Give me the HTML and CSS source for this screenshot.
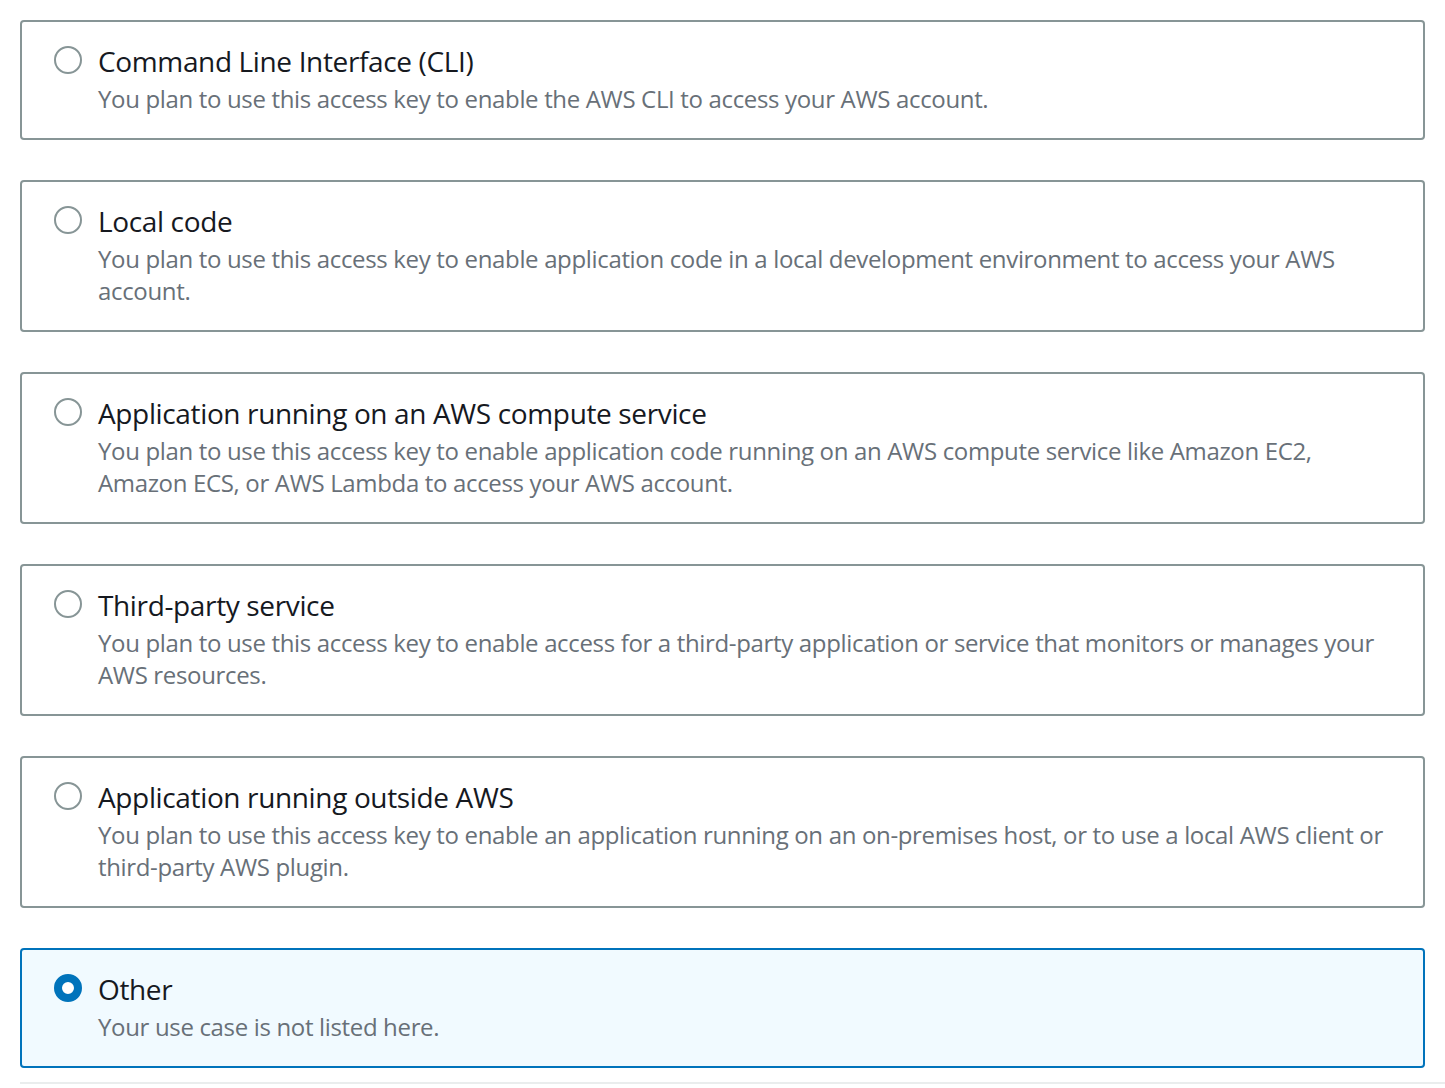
FILE: index.html
```html
<!DOCTYPE html>
<html lang="en">
<head>
<meta charset="utf-8">
<title>Access key best practices &amp; alternatives</title>
<link rel="stylesheet" href="styles.css">
</head>
<body>
<div class="page">
  <div class="tiles" role="radiogroup">
    <label class="tile">
      <span class="radio"></span>
      <span class="text">
        <span class="title">Command Line Interface (CLI)</span>
        <span class="desc">You plan to use this access key to enable the AWS CLI to access your AWS account.</span>
      </span>
    </label>
    <label class="tile">
      <span class="radio"></span>
      <span class="text">
        <span class="title">Local code</span>
        <span class="desc">You plan to use this access key to enable application code in a local development environment to access your AWS account.</span>
      </span>
    </label>
    <label class="tile">
      <span class="radio"></span>
      <span class="text">
        <span class="title">Application running on an AWS compute service</span>
        <span class="desc">You plan to use this access key to enable application code running on an AWS compute service like Amazon EC2, Amazon ECS, or AWS Lambda to access your AWS account.</span>
      </span>
    </label>
    <label class="tile">
      <span class="radio"></span>
      <span class="text">
        <span class="title">Third-party service</span>
        <span class="desc">You plan to use this access key to enable access for a third-party application or service that monitors or manages your AWS resources.</span>
      </span>
    </label>
    <label class="tile">
      <span class="radio"></span>
      <span class="text">
        <span class="title">Application running outside AWS</span>
        <span class="desc">You plan to use this access key to enable an application running on an on-premises host, or to use a local AWS client or third-party AWS plugin.</span>
      </span>
    </label>
    <label class="tile tile-selected">
      <span class="radio radio-checked"></span>
      <span class="text">
        <span class="title">Other</span>
        <span class="desc">Your use case is not listed here.</span>
      </span>
    </label>
  </div>
  <div class="divider"></div>
</div>
</body>
</html>
```

FILE: styles.css
```css
html, body {
  margin: 0;
  padding: 0;
  background: #ffffff;
}

body {
  font-family: "Open Sans", "Noto Sans", "Liberation Sans", sans-serif;
  color: #16191f;
}

.page {
  padding: 20px 0 0 20px;
}

.tiles {
  display: flex;
  flex-direction: column;
  gap: 40px;
  margin-right: 20px;
}

.tile {
  display: flex;
  align-items: flex-start;
  gap: 16px;
  padding: 17px 28px 23px 32px;
  border: 2px solid #879596;
  border-radius: 4px;
  background: #ffffff;
  cursor: pointer;
}

.tile-selected {
  border-color: #0073bb;
  background: #f1faff;
}

.radio {
  flex: 0 0 auto;
  box-sizing: border-box;
  width: 28px;
  height: 28px;
  margin-top: 7px;
  border: 2px solid #879596;
  border-radius: 50%;
  background: #ffffff;
}

.radio-checked {
  border: 8.5px solid #0073bb;
  background: #ffffff;
}

.text {
  display: flex;
  flex-direction: column;
  min-width: 0;
}

.title {
  font-size: 28px;
  line-height: 44px;
  letter-spacing: -0.36px;
  color: #16191f;
}

.desc {
  font-size: 24px;
  line-height: 32px;
  letter-spacing: -0.34px;
  color: #687078;
}

.divider {
  height: 2px;
  margin-top: 14px;
  background: #eaeded;
}
```
